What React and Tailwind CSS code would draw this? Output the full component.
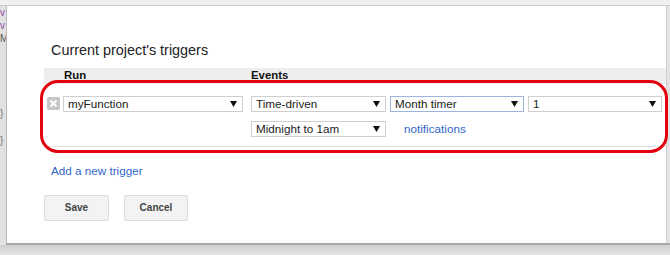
import React from "react";

const font = { fontFamily: '"Liberation Sans", Arial, sans-serif' };

function Select({ label, w, focused }) {
  return (
    <div
      className={`flex h-[16px] items-center justify-between bg-white pl-[4px] pr-[5px] text-[11.7px] leading-none text-[#222] border ${focused ? "border-[#9db4dc]" : "border-[#cfcfcf]"} ${w}`}
    >
      <span>{label}</span>
      <svg width="7" height="6" viewBox="0 0 7 6">
        <path d="M0 0 L7 0 L3.5 6 Z" fill="#111" />
      </svg>
    </div>
  );
}

export default function App() {
  return (
    <div className="relative h-[255px] w-[670px] overflow-hidden bg-[#e4e4e4]" style={font}>
      {/* top strip of code editor */}
      <div className="h-[6px] border-b border-[#c9c9c9] bg-[#f0f0f0]" />
      <div className="flex h-[237px]">
        {/* left gutter with code */}
        <div className="flex w-[7px] flex-col overflow-hidden border-r border-[#b9b9b9] bg-[#e2e2e2] text-[10px] leading-[13px]">
          <span className="text-[#8a4aa8]">v</span>
          <span className="text-[#8a4aa8]">v</span>
          <span className="text-[#555]">M</span>
          <span className="mt-[62px] text-[#777]">}</span>
          <span className="mt-[14px] text-[#777]">}</span>
        </div>
        {/* dialog */}
        <div className="flex flex-1 flex-col border-r border-[#cfcfcf] bg-white pl-[37px]">
          <div className="mt-[35px] pl-[7px] text-[14.4px] leading-[18px] text-[#222]">
            Current project's triggers
          </div>
          <div className="mt-[9px] flex h-[16px] items-center bg-[#eeeeee] text-[11.4px] font-bold text-[#111]">
            <span className="ml-[20px] w-[187px]">Run</span>
            <span>Events</span>
          </div>
          <div className="flex border-b border-[#e3e3e3] pb-[8px] pt-[12px]">
            <div className="ml-[3px] mt-[1px] flex h-[13px] w-[13px] items-center justify-center rounded-[2px] bg-[#c6c6c6]">
              <svg width="9" height="9" viewBox="0 0 9 9">
                <path d="M1.5 1.5 L7.5 7.5 M7.5 1.5 L1.5 7.5" stroke="#fff" strokeWidth="2" />
              </svg>
            </div>
            <div className="ml-[3px]">
              <Select label="myFunction" w="w-[180px]" />
            </div>
            <div className="ml-[8px] flex flex-col gap-[8px]">
              <div className="flex gap-[4px]">
                <Select label="Time-driven" w="w-[135px]" />
                <Select label="Month timer" w="w-[134px]" focused />
                <Select label="1" w="w-[134px]" />
              </div>
              <div className="flex items-center">
                <Select label="Midnight to 1am" w="w-[135px]" />
                <span className="ml-[18px] text-[11.7px] text-[#3366cc]">notifications</span>
              </div>
            </div>
          </div>
          <div className="mt-[17px] pl-[7px] text-[11.7px] leading-[14px] text-[#3366cc]">
            Add a new trigger
          </div>
          <div className="mt-[17px] flex gap-[15px]">
            <button className="h-[26px] w-[65px] rounded-[2px] border border-[#dcdcdc] bg-[#f3f3f3] text-[10px] font-bold text-[#444]">
              Save
            </button>
            <button className="h-[26px] w-[64px] rounded-[2px] border border-[#dcdcdc] bg-[#f3f3f3] text-[10px] font-bold text-[#444]">
              Cancel
            </button>
          </div>
        </div>
        <div className="w-[3px] bg-[#e4e4e4]" />
      </div>
      {/* bottom shadow */}
      <div className="ml-[6px] h-[2px] bg-[#a9a9a9]" />
      <div className="h-[10px] bg-gradient-to-b from-[#cfcfcf] to-[#e6e6e6]" />

      {/* red annotation */}
      <div className="pointer-events-none absolute left-[40px] top-[80px] h-[73px] w-[628px] rounded-[18px] border-[3px] border-[#e0000f]" />
    </div>
  );
}
